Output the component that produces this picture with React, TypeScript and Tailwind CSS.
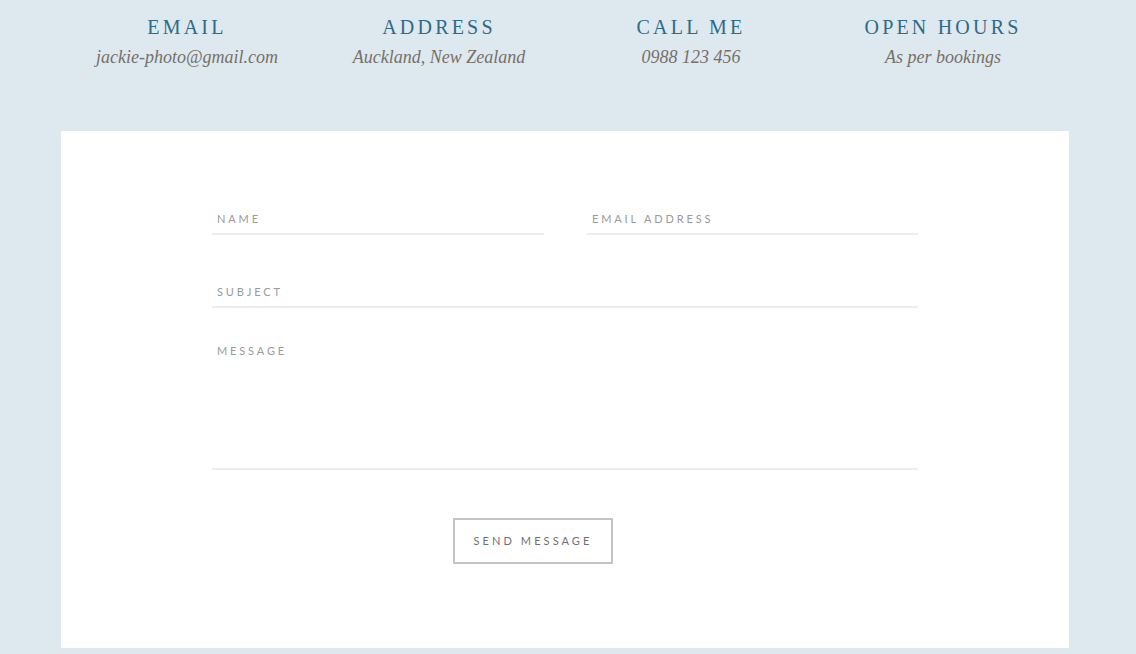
const info = [
  { title: "EMAIL", value: "jackie-photo@gmail.com" },
  { title: "ADDRESS", value: "Auckland, New Zealand" },
  { title: "CALL ME", value: "0988 123 456" },
  { title: "OPEN HOURS", value: "As per bookings" },
];

const fieldClass =
  "min-w-0 border-0 border-b-2 border-[#ededed] bg-transparent px-[5px] text-[11px] tracking-[0.26em] text-[#666] outline-none placeholder:text-[#9a9a9a]";

export default function App() {
  return (
    <div className="h-[654px] w-full bg-[#dde9ef] font-['Lato',sans-serif]">
      <div className="ml-[61px] w-[1008px]">
        <div className="grid h-[131px] grid-cols-4 pt-[14px]">
          {info.map((item) => (
            <div key={item.title} className="flex flex-col items-center">
              <h3 className="font-['Liberation_Serif',serif] text-[20px] leading-[26px] tracking-[0.16em] text-[#2e6a89]">
                {item.title}
              </h3>
              <p className="mt-[4px] font-['Liberation_Serif',serif] text-[18px] italic leading-[26px] text-[#77706a]">
                {item.value}
              </p>
            </div>
          ))}
        </div>

        <div className="h-[517px] bg-white px-[151px] pt-[72px]">
          <form className="flex flex-col">
            <div className="flex gap-[43px]">
              <input type="text" placeholder="NAME" className={fieldClass + " h-[32px] w-[332px]"} />
              <input type="email" placeholder="EMAIL ADDRESS" className={fieldClass + " h-[32px] flex-1"} />
            </div>
            <input type="text" placeholder="SUBJECT" className={fieldClass + " mt-[41px] h-[32px] w-full"} />
            <textarea
              placeholder="MESSAGE"
              className={fieldClass + " mt-[28px] h-[134px] w-full resize-none pt-[7px]"}
            />
            <div className="mt-[48px] flex">
              <button
                type="button"
                className="ml-[241px] h-[46px] w-[160px] border-2 border-[#c4c4c4] bg-white text-[11px] tracking-[0.28em] text-[#6f6f6f]"
              >
                SEND MESSAGE
              </button>
            </div>
          </form>
        </div>
      </div>
    </div>
  );
}
